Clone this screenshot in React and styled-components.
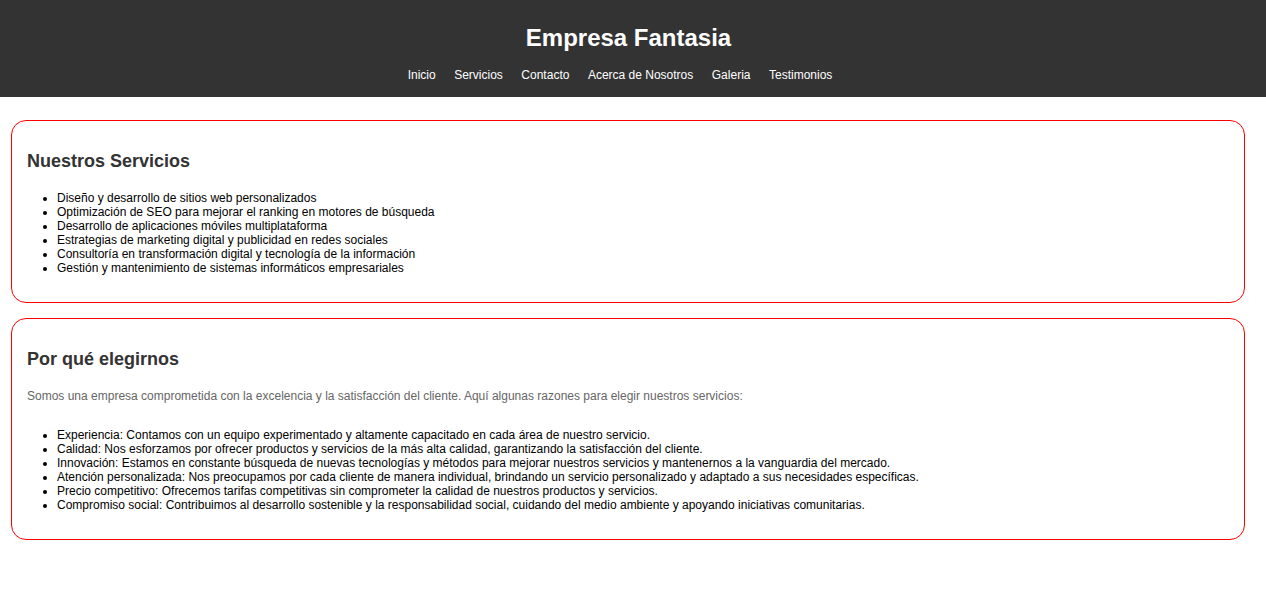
import React from "react";
import styled, { createGlobalStyle } from "styled-components";

const GlobalStyle = createGlobalStyle`
  body {
    margin: 0;
    background: #fff;
    font-family: "Liberation Sans", Arial, sans-serif;
  }
`;

const Header = styled.header`
  background: #333;
  color: #fff;
  text-align: center;
  padding: 24px 0 15px;
`;

const Title = styled.h1`
  margin: 0 0 16px;
  padding-right: 9px;
  font-size: 24px;
  font-weight: bold;
`;

const Nav = styled.nav`
  display: flex;
  justify-content: center;
  gap: 18.5px;
  padding-right: 26px;
  font-size: 12px;
`;

const NavLink = styled.a`
  color: #fff;
  text-decoration: none;
`;

const Main = styled.main`
  display: flex;
  flex-direction: column;
  gap: 15px;
  padding: 23px 21px 0 11px;
`;

const Section = styled.section`
  border: 1px solid #f00;
  border-radius: 15px;
  padding: 15px;
`;

const Heading = styled.h2`
  margin: 15px 0 19px;
  font-size: 18px;
  font-weight: bold;
  color: #333;
`;

const Intro = styled.p`
  margin: 0 0 25px;
  font-size: 12px;
  color: #666;
`;

const List = styled.ul`
  margin: 0 0 12px;
  padding-left: 30px;
  font-size: 12px;
  line-height: 14px;
  color: #000;
`;

const navItems = ["Inicio", "Servicios", "Contacto", "Acerca de Nosotros", "Galeria", "Testimonios"];

const services = [
  "Diseño y desarrollo de sitios web personalizados",
  "Optimización de SEO para mejorar el ranking en motores de búsqueda",
  "Desarrollo de aplicaciones móviles multiplataforma",
  "Estrategias de marketing digital y publicidad en redes sociales",
  "Consultoría en transformación digital y tecnología de la información",
  "Gestión y mantenimiento de sistemas informáticos empresariales",
];

const reasons = [
  "Experiencia: Contamos con un equipo experimentado y altamente capacitado en cada área de nuestro servicio.",
  "Calidad: Nos esforzamos por ofrecer productos y servicios de la más alta calidad, garantizando la satisfacción del cliente.",
  "Innovación: Estamos en constante búsqueda de nuevas tecnologías y métodos para mejorar nuestros servicios y mantenernos a la vanguardia del mercado.",
  "Atención personalizada: Nos preocupamos por cada cliente de manera individual, brindando un servicio personalizado y adaptado a sus necesidades específicas.",
  "Precio competitivo: Ofrecemos tarifas competitivas sin comprometer la calidad de nuestros productos y servicios.",
  "Compromiso social: Contribuimos al desarrollo sostenible y la responsabilidad social, cuidando del medio ambiente y apoyando iniciativas comunitarias.",
];

const App = () => {
  return (
    <>
      <GlobalStyle />
      <Header>
        <Title>Empresa Fantasia</Title>
        <Nav>
          {navItems.map((item) => (
            <NavLink key={item} href="#">
              {item}
            </NavLink>
          ))}
        </Nav>
      </Header>
      <Main>
        <Section>
          <Heading>Nuestros Servicios</Heading>
          <List>
            {services.map((s) => (
              <li key={s}>{s}</li>
            ))}
          </List>
        </Section>
        <Section>
          <Heading>Por qué elegirnos</Heading>
          <Intro>
            Somos una empresa comprometida con la excelencia y la satisfacción del cliente. Aquí algunas razones para elegir nuestros servicios:
          </Intro>
          <List>
            {reasons.map((r) => (
              <li key={r}>{r}</li>
            ))}
          </List>
        </Section>
      </Main>
    </>
  );
};

export default App;
